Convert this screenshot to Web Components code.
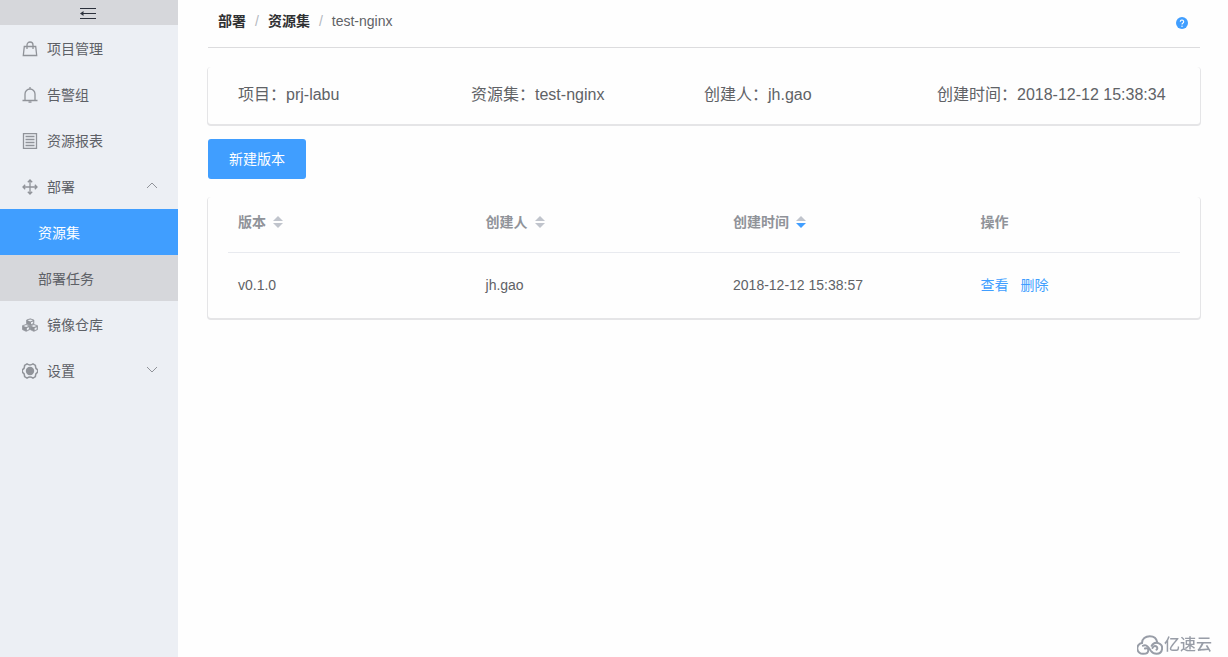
<!DOCTYPE html>
<html lang="zh-CN">
<head>
<meta charset="utf-8">
<meta name="viewport" content="width=device-width, initial-scale=1">
<title>部署 / 资源集 / test-nginx</title>
<style>
  html { height: 100%; }
  body {
    margin: 0; min-height: 100%; display: flex;
    background: #fefefe; color: #606266;
    font: 14px/20px "Liberation Sans", "Noto Sans CJK SC", sans-serif;
    --brand: #409eff; --line: #dcdcde; --edge: #e5e5e7; --muted: #909399;
  }
</style>
</head>
<body>
<side-menu>
  <menu-item icon="bag">项目管理</menu-item>
  <menu-item icon="bell">告警组</menu-item>
  <menu-item icon="list">资源报表</menu-item>
  <menu-item icon="move" arrow="up">部署
    <sub-item slot="sub" active>资源集</sub-item>
    <sub-item slot="sub">部署任务</sub-item>
  </menu-item>
  <menu-item icon="cubes">镜像仓库</menu-item>
  <menu-item icon="gear" arrow="down">设置</menu-item>
</side-menu>
<app-page>
  <page-header slot="header">
    <bread-crumb href="#deploy">部署</bread-crumb>
    <bread-crumb href="#sets">资源集</bread-crumb>
    <bread-crumb>test-nginx</bread-crumb>
  </page-header>
  <info-card>
    <info-field label="项目">prj-labu</info-field>
    <info-field label="资源集">test-nginx</info-field>
    <info-field label="创建人">jh.gao</info-field>
    <info-field label="创建时间">2018-12-12 15:38:34</info-field>
  </info-card>
  <primary-button>新建版本</primary-button>
  <version-table></version-table>
</app-page>
<site-mark>亿速云</site-mark>

<script>
function define(name, render) {
  customElements.define(name, class extends HTMLElement {
    constructor() {
      super();
      this.attachShadow({ mode: 'open' });
    }
    connectedCallback() {
      this.shadowRoot.innerHTML = render(this);
    }
  });
}

const icons = {
  bag: '<path d="M2.300 5.500h11.400l1 9H1.300zM5 8V4a3 3 0 0 1 6 0v4" />',
  bell: '<path d="M.5 13.500h15M3 13.500V7a5 5 0 0 1 10 0v6.500M8 2V0M6.500 15.200h3"/>',
  list: '<path d="M1.500.5h13v15h-13zM3.500 3.500h9M3.500 6.500h9M3.500 9.500h9M3.500 12.500h9"/>',
  move: '<path d="M8 1v14M1 8h14M5.800 3.200L8 1l2.200 2.200M5.800 12.800L8 15l2.200-2.200M3.200 5.800L1 8l2.200 2.200M12.800 5.800L15 8l-2.200 2.200"/>',
  cubes: '<path d="M9 1l4 1.300v4L9 8 5 6.300v-4zM4.500 7.200l4 1.300v4.300l-4 1.900-4-1.900V8.500zM13 7.200l4 1.300v4.300l-4 1.900-4-1.900V8.500z" fill="currentColor" stroke-width=".8" stroke-linejoin="round"/><path fill="#eceff4" stroke="none" d="M6 2.600l3-1 3 1-3 1.200zM1.600 8.800l2.900-1 2.900 1L4.500 10zM10.100 8.800l2.900-1 2.900 1L13 10zM9.800 4.800L12.200 4v1.900l-2.400 1zM5.300 11l2.300-.9v2.200l-2.300 1.100zM13.800 11l2.300-.9v2.200l-2.300 1.100z"/>',
  gear: '<circle cx="8" cy="8" r="4.200" fill="currentColor" stroke="none"/><path stroke-width="1.500" d="M5 .9q3 2 6 0l2.400 1.500q-.2 3.200 2.200 4.300v2.600q-2.400 1.100-2.200 4.300L11 15.100q-3-2-6 0l-2.400-1.500Q2.800 10.400.4 9.300V6.700Q2.800 5.600 2.600 2.400z"/>'
};
const boxes = { cubes: '0 0 17.500 15.500' };

define('side-menu', () => `
  <style>
    :host { display: block; flex: 0 0 178px; background: #eceff4; }
    button { display: flex; width: 100%; height: 25px; padding: 0 2px 0 0; border: 0; align-items: center; justify-content: center; background: #d6d7db; color: #2b303b; }
    svg { width: 18px; height: 14px; }
    nav { display: block; }
  </style>
  <button type="button" aria-label="收起菜单"><svg viewBox="0 0 18 14" fill="none" stroke="currentColor"><path d="M1 2.500h16M6 7.500h11M1 12.500h16"/><path d="M1 7.500L4.500 5v5z" fill="currentColor" stroke="none"/><path d="M3 7.500h4"/></svg></button>
  <nav><slot></slot></nav>`);

define('menu-item', el => {
  const dir = el.getAttribute('arrow');
  const icon = el.getAttribute('icon');
  const arrow = dir ? `<svg class="arrow" viewBox="0 0 12 12" fill="none" stroke="currentColor"><path d="${dir === 'up' ? 'M1 9l5-5 5 5' : 'M1 4l5 5 5-5'}"/></svg>` : '';
  return `
  <style>
    :host { display: block; color: #5d6066; }
    a { display: flex; align-items: center; height: 46px; box-sizing: border-box; padding: 2px 20px 0 22px; gap: 9px; color: inherit; text-decoration: none; }
    svg { flex: none; color: #909399; }
    .icon { width: 16px; height: 16px; }
    .arrow { width: 12px; height: 12px; margin-left: auto; margin-bottom: 5px; }
  </style>
  <a href="#${icon}"><svg class="icon" viewBox="${boxes[icon] || '0 0 16 16'}" fill="none" stroke="currentColor" stroke-width="1.300">${icons[icon]}</svg><span><slot></slot></span>${arrow}</a>
  <slot name="sub"></slot>`;
});

define('sub-item', () => `
  <style>
    :host { display: block; background: #d6d7db; color: #5d6066; }
    :host([active]) { background: var(--brand); color: #fff; }
    a { display: block; padding: 14px 38px 12px; color: inherit; text-decoration: none; }
  </style>
  <a href="#sub"><slot></slot></a>`);

define('app-page', () => `
  <style>
    :host { display: block; flex: 1; min-width: 0; padding: 0 28px 0 30px; }
    main { display: flex; flex-direction: column; align-items: flex-start; }
    ::slotted(info-card), ::slotted(version-table) { align-self: stretch; }
    ::slotted(info-card) { margin: 19px 0 15px; }
    ::slotted(version-table) { margin-top: 18px; }
  </style>
  <slot name="header"></slot>
  <main><slot></slot></main>`);

define('page-header', () => `
  <style>
    :host { display: flex; align-items: center; justify-content: space-between; height: 45px; padding: 0 10px 2px; border-bottom: 1px solid var(--line); }
    nav { display: flex; padding-bottom: 4px; }
    button { display: flex; border: 0; padding: 0 2px; background: none; color: var(--brand); }
    svg { width: 12px; height: 12px; }
  </style>
  <nav aria-label="路径"><slot></slot></nav>
  <button type="button" aria-label="帮助"><svg viewBox="0 0 12 12"><circle cx="6" cy="6" r="6" fill="currentColor"/><path d="M4.300 4.700a1.700 1.700 0 1 1 2.600 1.400Q6 6.600 6 7.400" fill="none" stroke="#fff" stroke-width="1.100"/><circle cx="6" cy="9.200" r=".7" fill="#fff"/></svg></button>`);

define('bread-crumb', el => {
  const href = el.getAttribute('href');
  return `
  <style>
    :host { display: flex; }
    a { color: #303133; font-weight: 700; text-decoration: none; }
    i { margin: 0 9px; color: #b4b8c0; font-style: normal; }
  </style>
  ${href ? `<a href="${href}"><slot></slot></a><i>/</i>` : '<span><slot></slot></span>'}`;
});

define('info-card', () => `
  <style>
    :host { display: grid; grid-template-columns: repeat(4, 1fr); padding: 16px 30px 17px; border-radius: 3px; box-shadow: 0 1px 0 1px var(--edge); background: #fefefe; font-size: 16px; line-height: 24px; }
  </style>
  <slot></slot>`);

define('info-field', el => `<style>:host { display: block; white-space: nowrap; }</style><span>${el.getAttribute('label')}：</span><slot></slot>`);

define('primary-button', () => `
  <style>
    :host { display: block; }
    button { display: block; height: 40px; padding: 0 21px; border: 0; border-radius: 3px; background: var(--brand); color: #fff; font: inherit; }
  </style>
  <button type="button"><slot></slot></button>`);

define('sort-arrows', () => `
  <style>
    :host { display: inline-block; width: 10px; height: 12px; margin-left: 7px; vertical-align: -1px; color: #c0c4cc; }
    svg { display: block; }
    :host([order="desc"]) .down { fill: var(--brand); }
  </style>
  <svg width="10" height="12" viewBox="0 0 10 12" fill="currentColor"><path d="M0 5l5-5 5 5z"/><path class="down" d="M0 7h10l-5 5z"/></svg>`);

define('version-table', () => `
  <style>
    :host { display: block; padding: 0 20px; border-radius: 3px; box-shadow: 0 1px 0 1px var(--edge); background: #fefefe; }
    table { width: 100%; table-layout: fixed; border-collapse: collapse; }
    col { width: 26%; }
    col:last-child { width: 22%; }
    th, td { padding: 0 10px; text-align: left; }
    th { height: 55px; padding-bottom: 5px; box-sizing: border-box; border-bottom: 1px solid #e8eaef; color: var(--muted); font-weight: 700; }
    td { height: 65px; }
    a { color: var(--brand); text-decoration: none; }
    .links { display: flex; gap: 12px; }
  </style>
  <table>
    <colgroup><col><col><col><col></colgroup>
    <thead><tr><th scope="col">版本<sort-arrows></sort-arrows></th><th scope="col">创建人<sort-arrows></sort-arrows></th><th scope="col">创建时间<sort-arrows order="desc"></sort-arrows></th><th scope="col">操作</th></tr></thead>
    <tbody><tr><td>v0.1.0</td><td>jh.gao</td><td>2018-12-12 15:38:57</td><td><div class="links"><a href="#view">查看</a><a href="#delete">删除</a></div></td></tr></tbody>
  </table>`);

define('site-mark', () => `
  <style>
    :host { position: fixed; right: 16px; bottom: 0; display: flex; align-items: center; gap: 1px; color: #989da7; font-size: 16px; line-height: 24px; font-weight: 500; }
    svg { width: 26px; height: 20px; }
  </style>
  <svg viewBox="0 0 26 20" fill="none" stroke="currentColor" stroke-width="2" stroke-linecap="round"><path d="M5 8C5 4 8.500 1.200 12.800 1.200c3.900 0 6.800 2.300 7.500 6.300"/><path d="M6 10.800c1.800-1.300 4-.5 5.500 1.700l2.500 3.500c1.500 2 3.300 2.800 5.500 2.800a5.500 5.500 0 1 0-4.800-8"/><path d="M5 8a5.400 5.400 0 0 0 1.500 10.800c2.800 0 4.800-1.500 4.800-3.600 0-1.700-1.600-2.400-3.300-1.700M15.500 13c.5-1.600 2-2.300 3.500-1.700s1.800 2.500.5 3.400"/></svg>
  <span><slot></slot></span>`);
</script>
</body>
</html>
